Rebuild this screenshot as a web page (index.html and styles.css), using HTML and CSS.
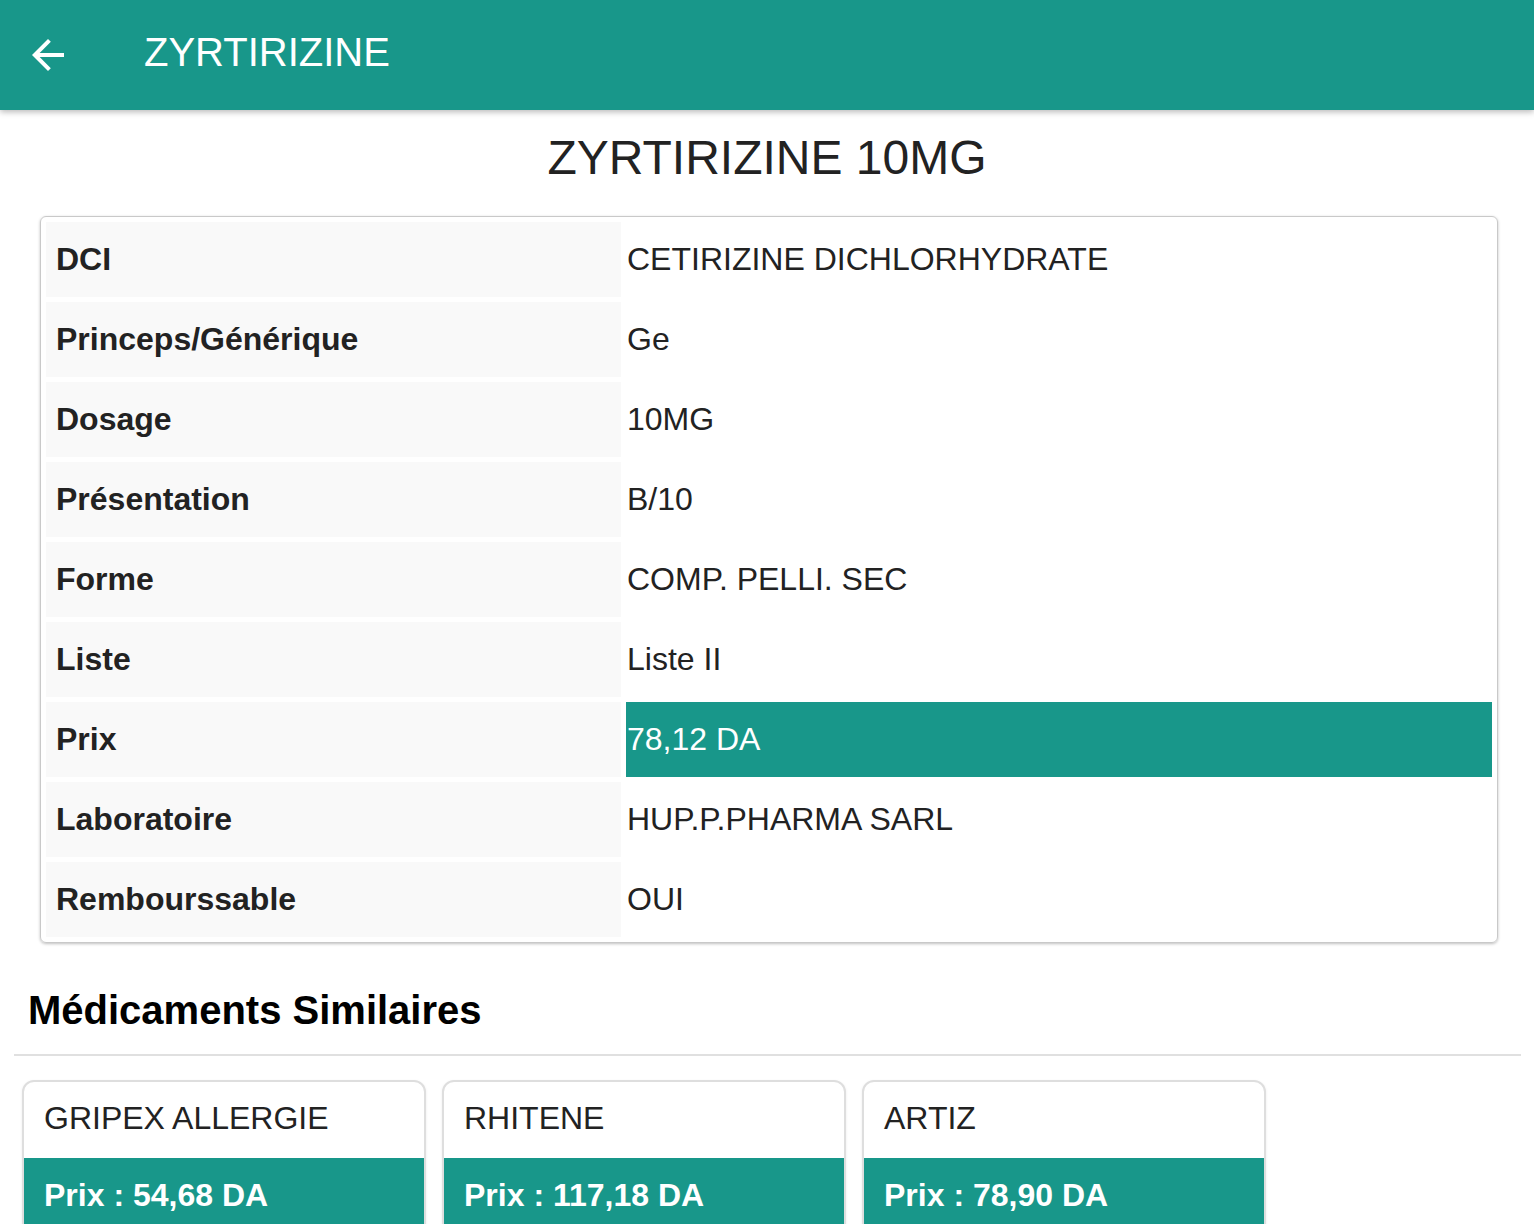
FILE: index.html
```html
<!DOCTYPE html>
<html lang="fr">
<head>
<meta charset="utf-8">
<title>ZYRTIRIZINE</title>
<link rel="stylesheet" href="styles.css">
</head>
<body>
<header class="appbar">
  <svg class="back" viewBox="0 0 24 24" width="48" height="48" aria-hidden="true"><path d="M20 11H7.83l5.59-5.59L12 4l-8 8 8 8 1.41-1.41L7.83 13H20v-2z" fill="#fff"/></svg>
  <span class="appbar-title">ZYRTIRIZINE</span>
</header>
<main>
  <h1 class="med-title">ZYRTIRIZINE 10MG</h1>
  <div class="info-card">
    <table class="info">
      <tr><th>DCI</th><td>CETIRIZINE DICHLORHYDRATE</td></tr>
      <tr><th>Princeps/Générique</th><td>Ge</td></tr>
      <tr><th>Dosage</th><td>10MG</td></tr>
      <tr><th>Présentation</th><td>B/10</td></tr>
      <tr><th>Forme</th><td>COMP. PELLI. SEC</td></tr>
      <tr><th>Liste</th><td>Liste II</td></tr>
      <tr><th>Prix</th><td class="price">78,12 DA</td></tr>
      <tr><th>Laboratoire</th><td>HUP.P.PHARMA SARL</td></tr>
      <tr><th>Rembourssable</th><td>OUI</td></tr>
    </table>
  </div>
  <h2 class="similar-title">Médicaments Similaires</h2>
  <hr class="sep">
  <div class="cards">
    <div class="card"><div class="card-name">GRIPEX ALLERGIE</div><div class="card-price">Prix : 54,68 DA</div></div>
    <div class="card"><div class="card-name">RHITENE</div><div class="card-price">Prix : 117,18 DA</div></div>
    <div class="card"><div class="card-name">ARTIZ</div><div class="card-price">Prix : 78,90 DA</div></div>
  </div>
</main>
</body>
</html>
```

FILE: styles.css
```css
html, body {
  margin: 0;
  padding: 0;
  background: #fff;
}
body {
  font-family: "Liberation Sans", Arial, sans-serif;
  color: #222;
  overflow: hidden;
}
.appbar {
  height: 110px;
  background: #18978a;
  display: flex;
  align-items: center;
  box-shadow: 0 2px 6px rgba(0,0,0,0.28);
  position: relative;
  z-index: 1;
}
.back {
  margin-left: 24px;
  flex: none;
}
.appbar-title {
  color: #fff;
  font-size: 40px;
  margin-left: 72px;
  padding-bottom: 6px;
}
.med-title {
  margin: 24px 0 34px;
  font-size: 48px;
  line-height: 48px;
  font-weight: normal;
  text-align: center;
  color: #222;
}
.info-card {
  margin-left: 40px;
  width: 1456px;
  border: 1px solid #c9c9c9;
  border-radius: 6px;
  box-shadow: 0 1px 3px rgba(0,0,0,0.25);
}
.info {
  width: 100%;
  border-collapse: separate;
  border-spacing: 5px;
}
.info th, .info td {
  height: 75px;
  padding: 0;
  font-size: 32px;
  vertical-align: middle;
  text-align: left;
}
.info th {
  width: 575px;
  background: #f9f9f9;
  font-weight: bold;
  padding-left: 10px;
  box-sizing: border-box;
  color: #222;
}
.info td {
  color: #222;
  padding-left: 1px;
}
.info td.price {
  background: #18978a;
  color: #fff;
}
.similar-title {
  margin: 47px 0 0 28px;
  font-size: 40px;
  line-height: 40px;
  font-weight: bold;
  color: #000;
}
.sep {
  margin: 24px 13px 0 14px;
  border: 0;
  height: 2px;
  background: #e0e0e0;
}
.cards {
  display: flex;
  gap: 16px;
  margin: 24px 0 0 22px;
}
.card {
  width: 404px;
  box-sizing: border-box;
  border: 2px solid #dedede;
  border-radius: 12px;
  overflow: hidden;
  box-shadow: 0 1px 3px rgba(0,0,0,0.08);
  background: #fff;
}
.card-name {
  height: 76px;
  display: flex;
  align-items: center;
  padding-left: 20px;
  padding-bottom: 3px;
  box-sizing: border-box;
  font-size: 32px;
  color: #222;
}
.card-price {
  height: 76px;
  display: flex;
  align-items: center;
  padding-left: 20px;
  padding-bottom: 2px;
  box-sizing: border-box;
  background: #18978a;
  color: #fff;
  font-size: 32px;
  font-weight: bold;
}
```
